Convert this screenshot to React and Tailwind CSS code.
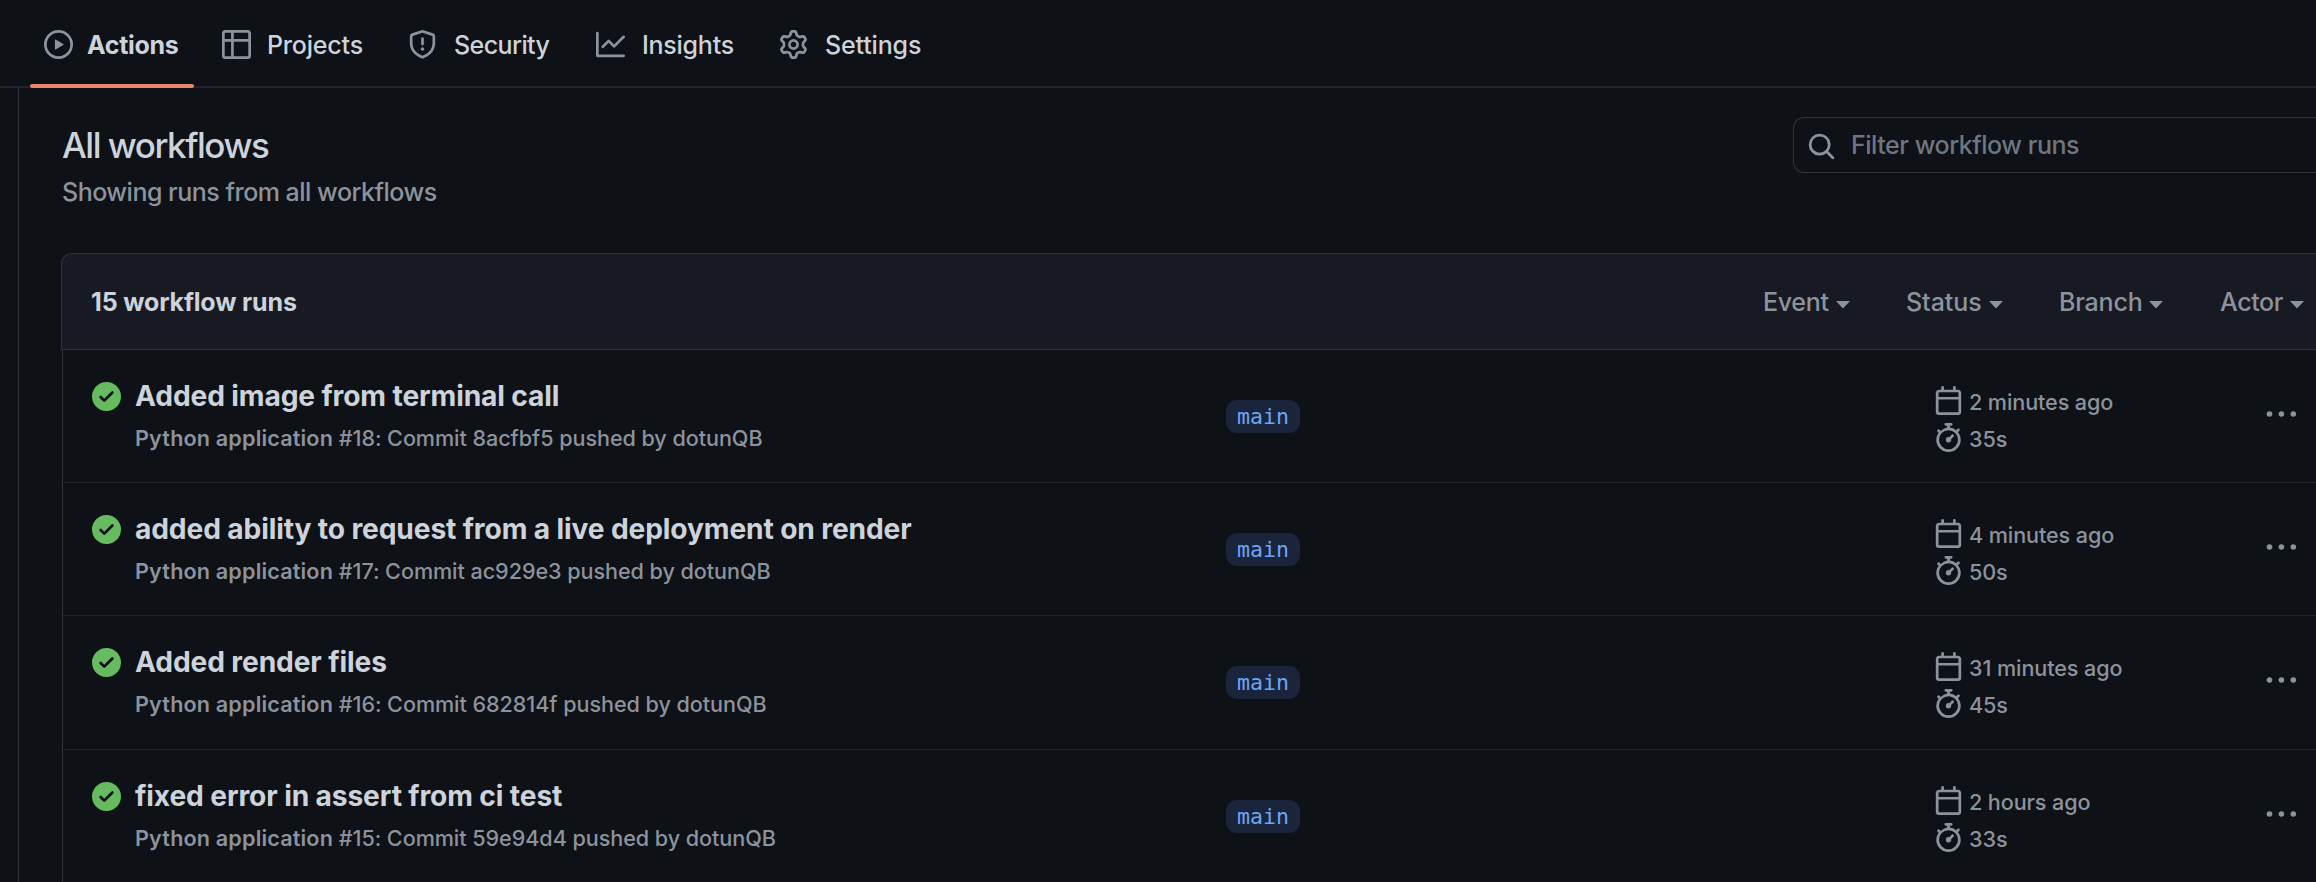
const ICONS = {
  play: "M8 0a8 8 0 1 1 0 16A8 8 0 0 1 8 0ZM1.5 8a6.5 6.5 0 1 0 13 0 6.5 6.5 0 0 0-13 0Zm4.879-2.773 4.264 2.559a.25.25 0 0 1 0 .428l-4.264 2.559A.25.25 0 0 1 6 10.559V5.442a.25.25 0 0 1 .379-.215Z",
  table: "M0 1.75C0 .784.784 0 1.75 0h12.5C15.216 0 16 .784 16 1.75v12.5A1.75 1.75 0 0 1 14.25 16H1.75A1.75 1.75 0 0 1 0 14.25ZM6.5 6.5v8h7.75a.25.25 0 0 0 .25-.25V6.5Zm8-1.5V1.75a.25.25 0 0 0-.25-.25H6.5V5Zm-13 1.5v7.75c0 .138.112.25.25.25H5v-8ZM5 5V1.5H1.75a.25.25 0 0 0-.25.25V5Z",
  shield: "M7.467.133a1.748 1.748 0 0 1 1.066 0l5.25 1.68A1.75 1.75 0 0 1 15 3.48V7c0 1.566-.32 3.182-1.303 4.682-.983 1.498-2.585 2.813-5.032 3.855a1.697 1.697 0 0 1-1.33 0c-2.447-1.042-4.049-2.357-5.032-3.855C1.32 10.182 1 8.566 1 7V3.48a1.755 1.755 0 0 1 1.217-1.667Zm.61 1.429a.25.25 0 0 0-.153 0l-5.25 1.68a.25.25 0 0 0-.174.238V7c0 1.358.275 2.666 1.057 3.86.784 1.194 2.121 2.34 4.366 3.297a.196.196 0 0 0 .154 0c2.245-.956 3.582-2.104 4.366-3.298C13.225 9.666 13.5 8.36 13.5 7V3.48a.251.251 0 0 0-.174-.237l-5.25-1.68ZM8.75 4.75v3a.75.75 0 0 1-1.5 0v-3a.75.75 0 0 1 1.5 0ZM9 10.5a1 1 0 1 1-2 0 1 1 0 0 1 2 0Z",
  graph: "M1.5 1.75V13.5h13.75a.75.75 0 0 1 0 1.5H.75a.75.75 0 0 1-.75-.75V1.75a.75.75 0 0 1 1.5 0Zm14.28 2.53-5.25 5.25a.75.75 0 0 1-1.06 0L7 7.06 4.28 9.78a.751.751 0 0 1-1.042-.018.751.751 0 0 1-.018-1.042l3.25-3.25a.75.75 0 0 1 1.06 0L10 7.94l4.72-4.72a.751.751 0 0 1 1.042.018.751.751 0 0 1 .018 1.042Z",
  gear: "M8 0a8.2 8.2 0 0 1 .701.031C9.444.095 9.99.645 10.16 1.29l.288 1.107c.018.066.079.158.212.224.231.114.454.243.668.386.123.082.233.09.299.071l1.103-.303c.644-.176 1.392.021 1.82.63.27.385.506.792.704 1.218.315.675.111 1.422-.364 1.891l-.814.806c-.049.048-.098.147-.088.294.016.257.016.515 0 .772-.01.147.038.246.088.294l.814.806c.475.469.679 1.216.364 1.891a7.977 7.977 0 0 1-.704 1.217c-.428.61-1.176.807-1.82.63l-1.102-.302c-.067-.019-.177-.011-.3.071a5.909 5.909 0 0 1-.668.386c-.133.066-.194.158-.211.224l-.29 1.106c-.168.646-.715 1.196-1.458 1.26a8.006 8.006 0 0 1-1.402 0c-.743-.064-1.289-.614-1.458-1.26l-.289-1.106c-.018-.066-.079-.158-.212-.224a5.738 5.738 0 0 1-.668-.386c-.123-.082-.233-.09-.299-.071l-1.103.303c-.644.176-1.392-.021-1.82-.63a8.12 8.12 0 0 1-.704-1.218c-.315-.675-.111-1.422.363-1.891l.815-.806c.05-.048.098-.147.088-.294a6.214 6.214 0 0 1 0-.772c.01-.147-.038-.246-.088-.294l-.815-.806C.635 6.045.431 5.298.746 4.623a7.92 7.92 0 0 1 .704-1.217c.428-.61 1.176-.807 1.82-.63l1.102.302c.067.019.177.011.3-.071.214-.143.437-.272.668-.386.133-.066.194-.158.211-.224l.29-1.106C6.009.645 6.556.095 7.299.03 7.53.01 7.764 0 8 0Zm-.571 1.525c-.036.003-.108.036-.137.146l-.289 1.105c-.147.561-.549.967-.998 1.189-.173.086-.34.183-.5.29-.417.278-.97.423-1.529.27l-1.103-.303c-.109-.03-.175.016-.195.045-.22.312-.412.644-.573.99-.014.031-.021.11.059.19l.815.806c.411.406.562.957.53 1.456a4.709 4.709 0 0 0 0 .582c.032.499-.119 1.05-.53 1.456l-.815.806c-.081.08-.073.159-.059.19.162.346.353.677.573.989.02.03.085.076.195.046l1.102-.303c.56-.153 1.113-.008 1.53.27.161.107.328.204.501.29.447.222.85.629.997 1.189l.289 1.105c.029.109.101.143.137.146a6.6 6.6 0 0 0 1.142 0c.036-.003.108-.036.137-.146l.289-1.105c.147-.561.549-.967.998-1.189.173-.086.34-.183.5-.29.417-.278.97-.423 1.529-.27l1.103.303c.109.029.175-.016.195-.045.22-.313.411-.644.573-.99.014-.031.021-.11-.059-.19l-.815-.806c-.411-.406-.562-.957-.53-1.456a4.709 4.709 0 0 0 0-.582c-.032-.499.119-1.05.53-1.456l.815-.806c.081-.08.073-.159.059-.19a6.464 6.464 0 0 0-.573-.989c-.02-.03-.085-.076-.195-.046l-1.102.303c-.56.153-1.113.008-1.53-.27a4.44 4.44 0 0 0-.501-.29c-.447-.222-.85-.629-.997-1.189l-.289-1.105c-.029-.11-.101-.143-.137-.146a6.6 6.6 0 0 0-1.142 0ZM11 8a3 3 0 1 1-6 0 3 3 0 0 1 6 0ZM9.5 8a1.5 1.5 0 1 0-3.001.001A1.5 1.5 0 0 0 9.5 8Z",
  search: "M10.68 11.74a6 6 0 0 1-7.922-8.982 6 6 0 0 1 8.982 7.922l3.04 3.04a.749.749 0 0 1-.326 1.275.749.749 0 0 1-.734-.215ZM11.5 7a4.499 4.499 0 1 0-8.997 0A4.499 4.499 0 0 0 11.5 7Z",
  check: "M8 16A8 8 0 1 0 8 0a8 8 0 0 0 0 16Zm3.78-9.72a.751.751 0 0 0-.018-1.042.751.751 0 0 0-1.042-.018L6.75 9.19 5.28 7.72a.751.751 0 0 0-1.042.018.751.751 0 0 0-.018 1.042l2 2a.75.75 0 0 0 1.06 0Z",
  calendar: "M4.75 0a.75.75 0 0 1 .75.75V2h5V.75a.75.75 0 0 1 1.5 0V2h1.25c.966 0 1.75.784 1.75 1.75v10.5A1.75 1.75 0 0 1 13.25 16H2.75A1.75 1.75 0 0 1 1 14.25V3.75C1 2.784 1.784 2 2.75 2H4V.75A.75.75 0 0 1 4.75 0ZM2.5 7.5v6.75c0 .138.112.25.25.25h10.5a.25.25 0 0 0 .25-.25V7.5Zm10.75-4H2.75a.25.25 0 0 0-.25.25V6h11V3.75a.25.25 0 0 0-.25-.25Z",
  stopwatch: "M5.75.75A.75.75 0 0 1 6.5 0h3a.75.75 0 0 1 0 1.5h-.75v1l-.001.041a6.724 6.724 0 0 1 3.464 1.435l.007-.006.75-.75a.749.749 0 0 1 1.275.326.749.749 0 0 1-.215.734l-.75.75-.006.007a6.75 6.75 0 1 1-10.548 0L2.72 5.53l-.75-.75a.751.751 0 0 1 .018-1.042.751.751 0 0 1 1.042-.018l.75.75.007.006A6.72 6.72 0 0 1 7.25 2.541V1.5H6.5a.75.75 0 0 1-.75-.75ZM8 14.5a5.25 5.25 0 1 0-.001-10.501A5.25 5.25 0 0 0 8 14.5Zm.389-6.7 1.33-1.33a.75.75 0 1 1 1.061 1.06L9.45 8.861A1.503 1.503 0 0 1 8 10.75a1.499 1.499 0 1 1 .389-2.95Z",
};

function Icon({ name, className = "text-[#8c939d]" }) {
  return (
    <svg viewBox="0 0 16 16" fill="currentColor" aria-hidden="true" className={`size-[29px] shrink-0 ${className}`}>
      <path fillRule={name === "check" ? "evenodd" : "nonzero"} d={ICONS[name]} />
    </svg>
  );
}

const TABS = [
  { icon: "play", label: "Actions", width: "w-[178px]", text: "-ml-px font-[650] tracking-[-0.3px]", active: true },
  { icon: "table", label: "Projects", width: "w-[186px]", text: "pl-px tracking-[-0.2px]" },
  { icon: "shield", label: "Security", width: "w-[188px]", text: "pl-[2px] tracking-[-0.58px]" },
  { icon: "graph", label: "Insights", width: "w-[183px]", text: "pl-[2px] tracking-[-0.25px]" },
  { icon: "gear", label: "Settings", width: "w-[180px]", text: "pl-[2px] tracking-[-0.15px]" },
];

const FILTERS = [
  { label: "Event", width: "w-[143px]", text: "tracking-[-0.3px]" },
  { label: "Status", width: "w-[153px]", text: "tracking-[-0.05px]" },
  { label: "Branch", width: "w-[161px]", text: "tracking-[-0.2px]" },
  { label: "Actor", width: "w-[96px]", text: "tracking-[-0.4px]" },
];

const RUNS = [
  { title: "Added image from terminal call", num: 18, sha: "8acfbf5", ago: "2 minutes ago", took: "35s", height: "h-[133px]" },
  { title: "added ability to request from a live deployment on render", num: 17, sha: "ac929e3", ago: "4 minutes ago", took: "50s", height: "h-[133px]" },
  { title: "Added render files", num: 16, sha: "682814f", ago: "31 minutes ago", took: "45s", height: "h-[134px]" },
  { title: "fixed error in assert from ci test", num: 15, sha: "59e94d4", ago: "2 hours ago", took: "33s", height: "h-[133px]" },
];

function Tab({ icon, label, width, text, active }) {
  return (
    <a className={`relative flex h-[88px] shrink-0 items-center gap-[15px] pl-[14px] pt-px ${width}`}>
      <Icon name={icon} />
      <span className={`pt-px leading-9 ${text}`}>{label}</span>
      {active && <span className="absolute bottom-0 left-0 h-1 w-[164px] rounded-[2px] bg-[#ea866c]" />}
    </a>
  );
}

function Filter({ label, width, text }) {
  return (
    <div className={`flex shrink-0 items-center gap-[7px] ${width}`}>
      <span className={text}>{label}</span>
      <svg viewBox="0 0 14 7.5" fill="currentColor" aria-hidden="true" className="mt-[4px] h-[7.5px] w-[14px]">
        <path d="M0 0h14L7 7.5Z" />
      </svg>
    </div>
  );
}

function MetaLine({ icon, children }) {
  return (
    <div className="flex h-[29px] items-center gap-[6px]">
      <Icon name={icon} />
      <span className="mt-[3px]">{children}</span>
    </div>
  );
}

function Run({ title, num, sha, ago, took, height }) {
  return (
    <li className={`flex shrink-0 border-b border-[#20242a] pl-[29px] ${height}`}>
      <Icon name="check" className="mt-8 text-[#66bb61]" />
      <div className="w-[1091px] shrink-0 pl-[14px] pt-[26px]">
        <h3 className="whitespace-nowrap text-[28.2px] font-[650] leading-10 tracking-[-0.14px] text-[#ccd3db]">{title}</h3>
        <p className="mt-[7px] whitespace-nowrap text-[21.6px] leading-[30px] tracking-[-0.06px]">
          <span className="font-semibold tracking-[0.16px]">Python application</span> #{num}: Commit {sha} pushed by dotunQB
        </p>
      </div>
      <div className="w-[708px] shrink-0 pl-[14px] pt-[50px]">
        <span className="flex h-[33px] w-[74px] items-center rounded-[11px] bg-[#1a243a] pl-[11px] font-['DejaVu_Sans_Mono',monospace] text-[21.6px] leading-[33px] text-[#6ea4f8]">
          main
        </span>
      </div>
      <div className="flex w-[345px] shrink-0 flex-col gap-2 pt-9 pl-[14px] text-[21.6px] leading-[30px] tracking-[-0.1px]">
        <MetaLine icon="calendar">{ago}</MetaLine>
        <MetaLine icon="stopwatch">{took}</MetaLine>
      </div>
      <svg viewBox="0 0 32 8" fill="currentColor" aria-hidden="true" className="mt-[60px] h-2 w-8 shrink-0">
        <circle cx="4.5" cy="4" r="2.8" />
        <circle cx="16.4" cy="4" r="2.8" />
        <circle cx="28.3" cy="4" r="2.8" />
      </svg>
    </li>
  );
}

export default function App() {
  return (
    <div className="flex h-[882px] w-full flex-col overflow-hidden bg-[#0e1116] font-[Inter,sans-serif] text-[25px] font-[450] text-[#8c939d]">
      <nav className="flex h-[88px] shrink-0 bg-[linear-gradient(to_top,#20242a_2px,transparent_2px)] pl-[30px] text-[#ccd3db]">
        {TABS.map((tab) => (
          <Tab key={tab.label} {...tab} />
        ))}
      </nav>
      <main className="ml-[18px] flex min-h-0 flex-1 flex-col border-l border-[#2f3339] pl-[42px]">
        <header className="flex h-[165px] shrink-0 justify-between pt-[29px]">
          <div className="pl-[1px] pt-[6px]">
            <h1 className="text-[35px] font-[450] leading-[44px] tracking-[-1.48px] text-[#ccd3db]">All workflows</h1>
            <p className="mt-[7px] leading-9 tracking-[-0.5px]">Showing runs from all workflows</p>
          </div>
          <div className="flex h-14 w-[523px] items-center rounded-l-[11px] border border-r-0 border-[#2f3339] pl-[13px]">
            <Icon name="search" className="mt-[3px]" />
            <span className="pl-[15px] leading-9 tracking-[-0.47px] text-[#6e7681]">Filter workflow runs</span>
          </div>
        </header>
        <section className="flex min-h-0 flex-1 flex-col">
          <div className="flex h-[97px] shrink-0 items-center justify-between rounded-tl-[11px] border border-r-0 border-[#2f3339] bg-[#181a23] pl-[29px] pt-[2px]">
            <h2 className="font-[650] tracking-[-0.15px] text-[#ccd3db]">15 workflow runs</h2>
            <div className="flex">
              {FILTERS.map((filter) => (
                <Filter key={filter.label} {...filter} />
              ))}
            </div>
          </div>
          <ul className="ml-px flex min-h-0 flex-1 flex-col overflow-hidden border-l border-[#2f3339]">
            {RUNS.map((run) => (
              <Run key={run.num} {...run} />
            ))}
          </ul>
        </section>
      </main>
    </div>
  );
}
